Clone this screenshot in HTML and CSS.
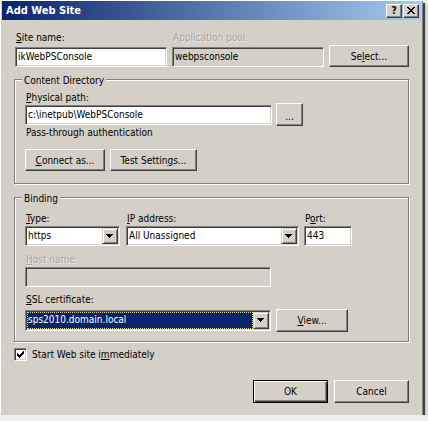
FILE: index.html
```html
<!DOCTYPE html>
<html lang="en">
<head>
<meta charset="utf-8">
<title>Add Web Site</title>
<link rel="stylesheet" href="styles.css">
</head>
<body>
<div class="window">
  <div class="titlebar">
    <span class="title">Add Web Site</span>
    <div class="caption-btns">
      <span class="cbtn help">?</span>
      <span class="cbtn close"><svg width="8" height="7" viewBox="0 0 8 7" shape-rendering="crispEdges"><path fill="#000" d="M0 0h2v1H0zM6 0h2v1H6zM1 1h2v1H1zM5 1h2v1H5zM2 2h4v1H2zM3 3h2v1H3zM2 4h4v1H2zM1 5h2v1H1zM5 5h2v1H5zM0 6h2v1H0zM6 6h2v1H6z"/></svg></span>
    </div>
  </div>
  <div class="client">
    <div class="row top-row">
      <div class="field site">
        <div class="lbl"><u>S</u>ite name:</div>
        <div class="edit">ikWebPSConsole</div>
      </div>
      <div class="field pool">
        <div class="lbl disabled">Application pool:</div>
        <div class="edit readonly">webpsconsole</div>
      </div>
      <div class="btn select-btn">Se<u>l</u>ect...</div>
    </div>

    <fieldset class="group content-dir">
      <legend>Content Directory</legend>
      <div class="lbl"><u>P</u>hysical path:</div>
      <div class="row path-row">
        <div class="edit path">c:\inetpub\WebPSConsole</div>
        <div class="btn browse">...</div>
      </div>
      <div class="lbl pass">Pass-through authentication</div>
      <div class="row btn-row">
        <div class="btn connect"><u>C</u>onnect as...</div>
        <div class="btn test">Test Settin<u>g</u>s...</div>
      </div>
    </fieldset>

    <fieldset class="group binding">
      <legend>Binding</legend>
      <div class="row binding-row">
        <div class="field type">
          <div class="lbl"><u>T</u>ype:</div>
          <div class="combo"><span class="combo-text">https</span><span class="drop"><svg width="7" height="4" viewBox="0 0 7 4" shape-rendering="crispEdges"><path fill="#000" d="M0 0h7v1H0zM1 1h5v1H1zM2 2h3v1H2zM3 3h1v1H3z"/></svg></span></div>
        </div>
        <div class="field ip">
          <div class="lbl"><u>I</u>P address:</div>
          <div class="combo"><span class="combo-text">All Unassigned</span><span class="drop"><svg width="7" height="4" viewBox="0 0 7 4" shape-rendering="crispEdges"><path fill="#000" d="M0 0h7v1H0zM1 1h5v1H1zM2 2h3v1H2zM3 3h1v1H3z"/></svg></span></div>
        </div>
        <div class="field port">
          <div class="lbl">P<u>o</u>rt:</div>
          <div class="edit">443</div>
        </div>
      </div>
      <div class="lbl disabled host-lbl"><u>H</u>ost name:</div>
      <div class="edit readonly host"></div>
      <div class="lbl ssl-lbl"><u>S</u>SL certificate:</div>
      <div class="row ssl-row">
        <div class="combo ssl"><span class="combo-text selected">sps2010.domain.local</span><span class="drop"><svg width="7" height="4" viewBox="0 0 7 4" shape-rendering="crispEdges"><path fill="#000" d="M0 0h7v1H0zM1 1h5v1H1zM2 2h3v1H2zM3 3h1v1H3z"/></svg></span></div>
        <div class="btn view"><u>V</u>iew...</div>
      </div>
    </fieldset>

    <div class="check-row">
      <span class="checkbox"><svg width="7" height="7" viewBox="0 0 7 7" shape-rendering="crispEdges"><path fill="#000" d="M6 0h1v1H6zM5 1h2v1H5zM0 2h1v1H0zM4 2h3v1H4zM0 3h2v1H0zM3 3h3v1H3zM0 4h5v1H0zM1 5h3v1H1zM2 6h1v1H2z"/></svg></span>
      <span class="check-text">Start Web site i<u>m</u>mediately</span>
    </div>

    <div class="row dialog-btns">
      <div class="btn default ok">OK</div>
      <div class="btn cancel">Cancel</div>
    </div>
  </div>
</div>
</body>
</html>
```

FILE: styles.css
```css
* { box-sizing: border-box; }
html, body { margin: 0; padding: 0; }
body {
  background: #ededed;
  font-family: "DejaVu Sans Condensed", "DejaVu Sans", sans-serif;
  font-stretch: condensed;
  font-size: 10px;
  line-height: 13px;
  color: #000;
}
u { text-decoration: underline; text-underline-offset: 1px; }

.window {
  width: 422px;
  height: 415px;
  background: #d4d0c8;
  border-left: 1px solid #fff;
  border-top: 1px solid #fff;
  padding: 0 1px;
  box-shadow: 1px 1px 0 #808080, 3px 3px 0 #404040, 4px 4px 3px rgba(0, 0, 0, 0.25);
}

.titlebar {
  height: 19px;
  display: flex;
  align-items: center;
  justify-content: space-between;
  padding: 0 2px 0 4px;
  background: linear-gradient(to right, #0a246a, #a6caf0);
}
.title { color: #fff; font-weight: bold; font-size: 11px; }
.caption-btns { display: flex; gap: 1px; }
.cbtn {
  width: 16px;
  height: 14px;
  display: flex;
  align-items: center;
  justify-content: center;
  background: #d4d0c8;
  border: 1px solid;
  border-color: #fff #404040 #404040 #fff;
  box-shadow: inset -1px -1px #808080;
}
.help { font-family: "DejaVu Sans", sans-serif; font-weight: bold; font-size: 10px; line-height: 10px; }

.client { padding: 11px 12px 0 13px; }
.row { display: flex; }
.lbl { height: 13px; white-space: nowrap; padding-left: 1px; }
.disabled { color: #a9a79f; text-shadow: 1px 1px 0 rgba(255, 255, 255, 0.5); }

.edit {
  height: 20px;
  background: #fff;
  border: 1px solid;
  border-color: #808080 #fff #fff #808080;
  box-shadow: inset 1px 1px #404040, inset -1px -1px #d4d0c8;
  padding: 1px 1px 1px 2px;
  line-height: 16px;
  white-space: nowrap;
  overflow: hidden;
}
.readonly { background: #d4d0c8; }

.btn {
  height: 22px;
  display: flex;
  align-items: center;
  justify-content: center;
  background: #d4d0c8;
  border: 1px solid;
  border-color: #fff #404040 #404040 #fff;
  box-shadow: inset -1px -1px #808080;
  white-space: nowrap;
}
.btn.default {
  border-color: #000;
  box-shadow: inset 1px 1px #fff, inset -1px -1px #404040, inset -2px -2px #808080;
}

/* top row */
.top-row { align-items: flex-end; }
.top-row .lbl { margin-bottom: 3px; }
.site { width: 152px; }
.pool { width: 152px; margin-left: 5px; }
.select-btn { width: 80px; margin-left: 5px; }

/* group boxes */
.group {
  min-width: 0;
  margin: 5px 0 0 -1px;
  padding: 4px 10px 12px 10px;
  border: 1px solid #808080;
  box-shadow: 1px 1px 0 #fff, inset 1px 1px 0 #fff;
}
.group legend {
  margin-left: -3px;
  padding: 2px 2px 0;
  line-height: 13px;
  background: #d4d0c8;
}

.content-dir .lbl { margin-bottom: 1px; }
.path-row { align-items: flex-start; }
.path { width: 247px; }
.browse { width: 27px; height: 23px; margin: -2px 0 -1px 4px; padding-top: 3px; }
.pass { margin-top: 1px; }
.btn-row { margin-top: 10px; }
.connect { width: 80px; }
.test { width: 87px; margin-left: 5px; }

.binding { margin-top: 6px; padding: 7px 10px 9px 10px; }
.binding-row .lbl { margin-bottom: 1px; }
.type { width: 95px; }
.ip { width: 173px; margin-left: 6px; }
.port { width: 48px; margin-left: 5px; }

.combo {
  height: 20px;
  display: flex;
  background: #fff;
  border: 1px solid;
  border-color: #808080 #fff #fff #808080;
  box-shadow: inset 1px 1px #404040, inset -1px -1px #d4d0c8;
  padding: 1px;
}
.combo-text {
  flex: 1;
  min-width: 0;
  padding-left: 1px;
  line-height: 16px;
  white-space: nowrap;
  overflow: hidden;
}
.drop {
  width: 16px;
  flex: none;
  background: #d4d0c8;
  border: 1px solid;
  border-color: #d4d0c8 #404040 #404040 #d4d0c8;
  box-shadow: inset 1px 1px #fff, inset -1px -1px #808080;
}
.drop svg { display: block; margin: 5px 0 0 3px; }

.host-lbl { margin-top: 7px; margin-bottom: 1px; }
.host { width: 246px; }
.ssl-lbl { margin-top: 6px; }
.ssl-row { margin-top: 3px; align-items: flex-start; }
.ssl { width: 246px; height: 21px; margin-top: 1px; }
.selected {
  background: #0a246a;
  color: #fff;
  outline: 1px dotted #d8d4a0;
  outline-offset: -1px;
}
.view { width: 72px; height: 23px; margin-left: 5px; }

/* checkbox */
.check-row { display: flex; align-items: center; margin-top: 6px; }
.checkbox {
  width: 13px;
  height: 13px;
  margin-left: -1px;
  display: flex;
  align-items: center;
  justify-content: center;
  background: #fff;
  border: 1px solid;
  border-color: #808080 #fff #fff #808080;
  box-shadow: inset 1px 1px #404040, inset -1px -1px #d4d0c8;
}
.checkbox svg { display: block; }
.check-text { margin-left: 5px; line-height: 13px; }

/* dialog buttons */
.dialog-btns { margin-top: 19px; justify-content: flex-end; }
.ok, .cancel { width: 75px; height: 23px; }
.cancel { margin-left: 6px; }
```
